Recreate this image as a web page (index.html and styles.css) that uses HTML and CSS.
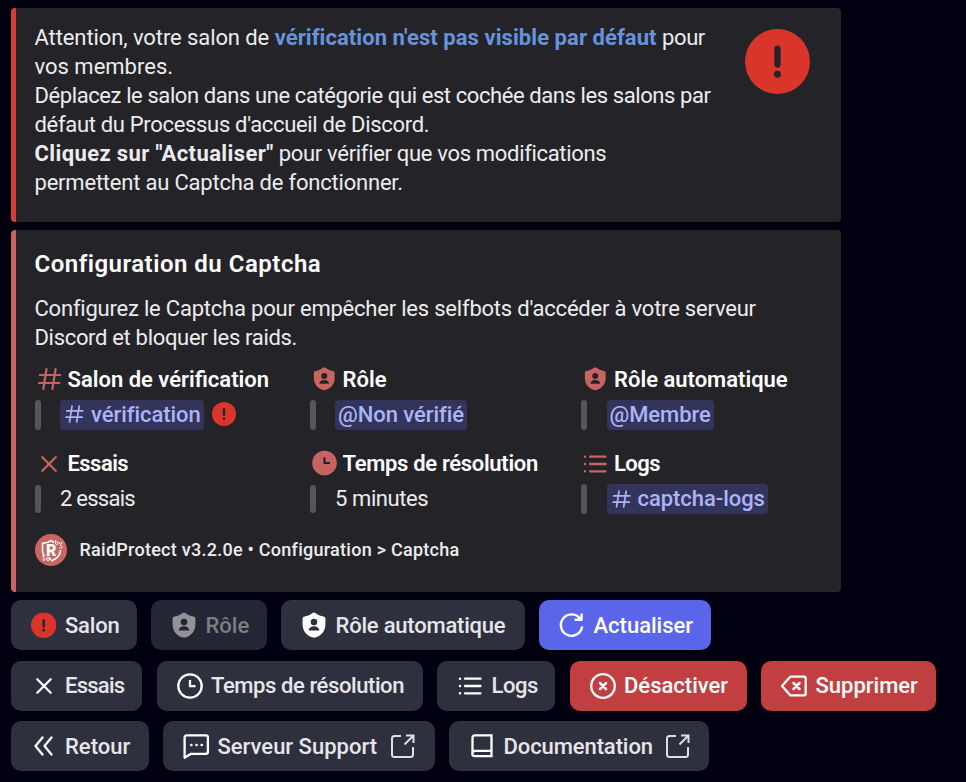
FILE: index.html
```html
<!DOCTYPE html>
<html lang="fr">
<head>
<meta charset="utf-8">
<title>Configuration du Captcha</title>
<link rel="stylesheet" href="styles.css">
</head>
<body>
<svg width="0" height="0" class="defs">
  <symbol id="alert" viewBox="0 0 28 28"><circle cx="14" cy="14" r="14" fill="#d9352b"/><path d="M14 8.500v6.800" stroke="#242428" stroke-width="2.700" stroke-linecap="round"/><circle cx="14" cy="19.500" r="1.500" fill="#242428"/></symbol>
  <symbol id="shield" viewBox="0 0 28 28"><path fill="currentColor" fill-rule="evenodd" d="M14 1.500c.5 0 .9.2 1.300.5 2.300 1.800 5 3 8.200 3.400 1.100.2 1.900.9 1.900 2v5.800c0 6.500-3.700 11-9.300 13a6 6 0 0 1-4.200 0c-5.600-2-9.300-6.500-9.300-13V7.400c0-1.100.8-1.800 1.900-2 3.200-.4 5.900-1.600 8.200-3.400.4-.3.800-.5 1.300-.5zM14 7.800a3.300 3.300 0 1 0 0 6.600 3.300 3.300 0 0 0 0-6.600zM9.300 19.500h9.400c.5 0 .7-.4.6-.8-.7-2-2.400-3.400-5.300-3.400s-4.600 1.400-5.300 3.400c-.1.4.1.8.6.8z"/></symbol>
  <symbol id="hash" viewBox="0 0 28 28"><path d="M4.800 10h20.400M4 18h20.400M11.500 4l-3.200 20M20.600 4l-3.200 20" fill="none" stroke="currentColor" stroke-width="2.200" stroke-linecap="round"/></symbol>
  <symbol id="cross" viewBox="0 0 28 28"><path d="M7.300 7.300l13.400 13.400M20.700 7.300L7.300 20.700" stroke="currentColor" stroke-width="2.300" stroke-linecap="round"/></symbol>
  <symbol id="list" viewBox="0 0 28 28"><path d="M9 6.700h15.500M9 14h15.500M9 21.300h15.500" stroke="currentColor" stroke-width="2.300" stroke-linecap="round"/><path d="M4 6.700h.1M4 14h.1M4 21.300h.1" stroke="currentColor" stroke-width="2.400" stroke-linecap="round"/></symbol>
  <symbol id="clock" viewBox="0 0 28 28"><circle cx="14" cy="14" r="11.700" fill="none" stroke="currentColor" stroke-width="2.300"/><path d="M14 8v6.200h5.500" fill="none" stroke="currentColor" stroke-width="2.300"/></symbol>
  <symbol id="external" viewBox="0 0 28 28"><path d="M12 4H5.500A2.500 2.500 0 0 0 3 6.500v16A2.500 2.500 0 0 0 5.500 25h16a2.500 2.500 0 0 0 2.500-2.500V15M17 3.500h7.500V11M24 4L15.500 12.500" fill="none" stroke="currentColor" stroke-width="2"/></symbol>
</svg>

<main>
  <section class="card warning">
    <div class="copy">
      <p><span class="s1">Attention, votre salon de</span> <a class="link">vérification n'est pas visible par défaut</a> <span class="s4">pour</span></p>
      <p>vos membres.</p>
      <p class="s4">Déplacez le salon dans une catégorie qui est cochée dans les salons par</p>
      <p class="s3">défaut du Processus d'accueil de Discord.</p>
      <p class="s3"><strong>Cliquez sur "Actualiser"</strong> pour vérifier que vos modifications</p>
      <p class="s2">permettent au Captcha de fonctionner.</p>
    </div>
    <svg class="thumb"><use href="#alert"/></svg>
  </section>

  <section class="card config">
    <h1>Configuration du Captcha</h1>
    <p class="s2">Configurez le Captcha pour empêcher les selfbots d'accéder à votre serveur</p>
    <p class="s3">Discord et bloquer les raids.</p>

    <div class="fields">
      <div class="field">
        <h2><svg class="icon"><use href="#hash"/></svg>Salon de vérification</h2>
        <div class="value"><span class="mention"><svg class="tag"><use href="#hash"/></svg>vérification</span><svg class="badge"><use href="#alert"/></svg></div>
      </div>
      <div class="field">
        <h2><svg class="icon" viewBox="0 0 28 28"><use href="#shield" x="1.500" y="1" width="25.500" height="25.500"/></svg>Rôle</h2>
        <div class="value"><span class="mention">@Non vérifié</span></div>
      </div>
      <div class="field">
        <h2><svg class="icon" viewBox="0 0 28 28"><use href="#shield" x="1.500" y="1" width="25.500" height="25.500"/></svg>Rôle automatique</h2>
        <div class="value"><span class="mention">@Membre</span></div>
      </div>
      <div class="field">
        <h2 class="s5"><svg class="icon"><use href="#cross"/></svg>Essais</h2>
        <div class="value short s6">2 essais</div>
      </div>
      <div class="field">
        <h2 class="s3"><svg class="icon" viewBox="0 0 28 28"><circle cx="14.500" cy="13" r="12.300" fill="currentColor"/><path d="M14.500 7.500v5.500h5.500" fill="none" stroke="#242428" stroke-width="2.200"/></svg>Temps de résolution</h2>
        <div class="value short s4">5 minutes</div>
      </div>
      <div class="field">
        <h2 class="s5"><svg class="icon"><use href="#list"/></svg>Logs</h2>
        <div class="value"><span class="mention"><svg class="tag"><use href="#hash"/></svg>captcha-logs</span></div>
      </div>
    </div>

    <footer>
      <svg class="logo" viewBox="0 0 32 32"><circle cx="16" cy="16" r="16" fill="#c96562"/><path d="M19 8.500L16 6.500l-3 1.700-5.500 1.300v7c0 2 .6 3.500 1.500 4.800M25.500 16c0 5-3.500 8.800-9.500 11M14 24l2 1.500" fill="none" stroke="#fff" stroke-width="1.600"/><text x="16.200" y="21.800" text-anchor="middle" class="letter">R</text><path d="M20.500 6v4M20.500 8.500a1.300 1.300 0 1 1 0 1.500M24 8l1.500 2.500L27.500 8M24.500 13.500a1.400 1.400 0 1 0 1-2M7 22h3.500M8.700 20.500v3" fill="none" stroke="#fff" stroke-width="1"/><circle cx="9" cy="25.500" r="1" fill="none" stroke="#fff" stroke-width=".8"/><circle cx="13" cy="25" r="1.500" fill="none" stroke="#fff"/></svg>
      <span>RaidProtect v3.2.0e • Configuration &gt; Captcha</span>
    </footer>
  </section>

  <div class="row">
    <button class="b-salon s2"><svg class="icon" viewBox="0 0 28 28"><use href="#alert" x="1" y="1.500" width="25.400" height="25.400"/></svg>Salon</button>
    <button class="b-role disabled" disabled><svg class="icon"><use href="#shield"/></svg>Rôle</button>
    <button class="b-auto s2"><svg class="icon white"><use href="#shield"/></svg>Rôle automatique</button>
    <button class="b-refresh primary"><svg class="icon" viewBox="0 0 28 28"><path d="M24 16.500A10.700 10.700 0 1 1 21.600 7M23.600 3.500v5.300h-6" fill="none" stroke="currentColor" stroke-width="2.400" stroke-linecap="round" stroke-linejoin="round"/></svg>Actualiser</button>
  </div>
  <div class="row">
    <button class="b-tries s6"><svg class="icon white"><use href="#cross"/></svg>Essais</button>
    <button class="b-time s4"><svg class="icon white"><use href="#clock"/></svg>Temps de résolution</button>
    <button class="b-logs s4"><svg class="icon white"><use href="#list"/></svg>Logs</button>
    <button class="b-disable danger"><svg class="icon" viewBox="0 0 28 28"><circle cx="14" cy="14" r="11.800" fill="none" stroke="currentColor" stroke-width="2.300"/><path d="M11 11l6 6M17 11l-6 6" stroke="currentColor" stroke-width="2.500" stroke-linecap="round"/></svg>Désactiver</button>
    <button class="b-delete danger"><svg class="icon" viewBox="0 0 28 28"><path d="M10.500 4.600h13.200a2 2 0 0 1 2 2v14.800a2 2 0 0 1-2 2H10.500L2 14z" fill="none" stroke="currentColor" stroke-width="2.300" stroke-linejoin="round"/><path d="M13.500 11l6 6M19.500 11l-6 6" stroke="currentColor" stroke-width="2.500" stroke-linecap="round"/></svg>Supprimer</button>
  </div>
  <div class="row">
    <button class="b-back"><svg class="icon white" viewBox="0 0 28 28"><path d="M12.500 5.500L5.500 14l7 8.500M21.500 5.500l-7 8.500 7 8.500" fill="none" stroke="currentColor" stroke-width="2.300" stroke-linecap="round" stroke-linejoin="round"/></svg>Retour</button>
    <button class="b-support"><svg class="icon white" viewBox="0 0 28 28"><path d="M2.600 25.700V5.400a2 2 0 0 1 2-2h19.300a2 2 0 0 1 2 2v14.400a2 2 0 0 1-2 2H9z" fill="none" stroke="currentColor" stroke-width="2.300" stroke-linejoin="round"/><path d="M9.300 13h.1M14.500 13h.1M19.700 13h.1" stroke="currentColor" stroke-width="2.700" stroke-linecap="round"/></svg>Serveur Support<svg class="icon out"><use href="#external"/></svg></button>
    <button class="b-docs s1"><svg class="icon white" viewBox="0 0 28 28"><path d="M23.500 18.800H7a2.700 2.700 0 0 0 0 5.400h16.500zM23.500 19V3.300H7A2.500 2.500 0 0 0 4.500 5.800v16" fill="none" stroke="currentColor" stroke-width="2.300"/></svg>Documentation<svg class="icon out"><use href="#external"/></svg></button>
  </div>
</main>
</body>
</html>
```
FILE: styles.css
```css
* { box-sizing: border-box; }

body {
  margin: 0;
  background: #010010;
  color: #ececef;
  font: 22px/28.9px Roboto, "Noto Sans", sans-serif;
}

.defs { display: block; position: absolute; }

main { padding: 8px 0 0 10.500px; }

p, h1, h2 { margin: 0; white-space: nowrap; }

/* tracking steps */
.s1 { letter-spacing: -.09px; }
.s2 { letter-spacing: -.21px; }
.s3 { letter-spacing: -.32px; }
.s4 { letter-spacing: -.41px; }
.s5 { letter-spacing: -.55px; }
.s6 { letter-spacing: -.75px; }

.card {
  width: 830.5px;
  border-left: 5px solid #c76461;
  border-radius: 4px;
  background: #242428;
  padding-left: 19px;
}

.warning {
  display: flex;
  justify-content: space-between;
  height: 214px;
  padding-top: 16.200px;
  padding-right: 31px;
  border-left-color: #d63f39;
  margin-bottom: 8px;
}

.link { color: #6693df; font-weight: 700; letter-spacing: .06px; }
strong { font-weight: 700; letter-spacing: .38px; }
.thumb { width: 65px; height: 65px; margin-top: 4.800px; }

.config { height: 362px; padding-top: 19px; }

h1 {
  color: #fff;
  font-size: 24px;
  font-weight: 600;
  line-height: 30px;
  letter-spacing: .5px;
  margin-bottom: 16px;
}

.fields {
  display: grid;
  grid-template-columns: 275px 271.5px 1fr;
  row-gap: 20px;
  margin-top: 12.500px;
}

h2 {
  display: flex;
  align-items: center;
  gap: 5px;
  height: 30px;
  color: #fff;
  font-size: 22px;
  font-weight: 600;
}

h2 .icon { color: #c76461; margin-top: -2px; }

.icon { width: 28px; height: 28px; flex: none; }

.value {
  display: flex;
  align-items: center;
  height: 30px;
  margin-top: 4.500px;
}

.value::before {
  content: "";
  width: 6px;
  height: 30px;
  margin-right: 19.500px;
  border-radius: 3px;
  background: #55555b;
}

.short { line-height: 32px; }
.short::before { height: 28px; }

.mention {
  display: flex;
  align-items: center;
  height: 30px;
  padding: 1px 3px 0;
  border-radius: 4px;
  background: #33345a;
  color: #abb4f8;
  font-weight: 500;
  letter-spacing: -.05px;
}

.tag { width: 22px; height: 22px; margin: -2px 6px 0 0; }
.badge { width: 24px; height: 24px; margin: -1px 0 0 8px; }

footer {
  display: flex;
  align-items: center;
  gap: 13px;
  margin-top: 20px;
  font-size: 18px;
  font-weight: 500;
  letter-spacing: .26px;
}

.logo { width: 32px; height: 32px; }
.letter { fill: #fff; font: 900 16px Roboto, sans-serif; letter-spacing: 0; }

.row { display: flex; gap: 14.500px; margin-top: 8px; }
.row + .row { margin-top: 10.700px; }

button {
  display: flex;
  align-items: center;
  gap: 7.500px;
  height: 50px;
  padding: 0 0 0 19px;
  border: 0;
  border-radius: 10px;
  background: #2f303e;
  color: #e6e6ea;
  font: 500 22px Roboto, "Noto Sans", sans-serif;
  white-space: nowrap;
}

.white { color: #fff; }
.disabled { background: #252635; color: #7c7c85; }
.disabled .icon { color: #929298; }
.primary { background: #5b65ea; color: #fff; }
.danger { background: #c23f41; color: #fff; }
.out { margin-left: 4px; color: #dedee3; }

.b-salon { width: 126px; }
.b-role { width: 115.500px; }
.b-auto { width: 243.500px; }
.b-refresh { width: 172px; }
.b-tries { width: 131.500px; }
.b-time { width: 266px; }
.b-logs { width: 118px; }
.b-disable { width: 177px; }
.b-delete { width: 175px; }
.b-back { width: 138px; }
.b-support { width: 271.500px; }
.b-docs { width: 260px; }
```
